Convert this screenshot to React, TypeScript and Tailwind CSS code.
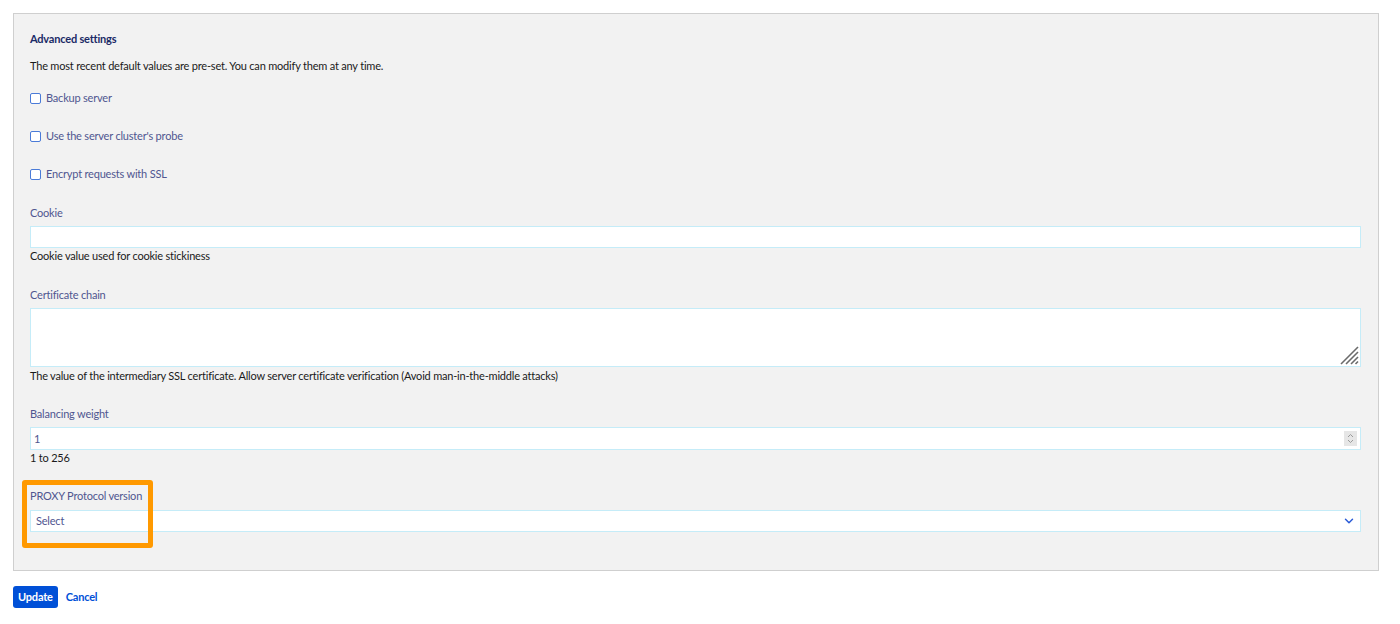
import { ChevronDown } from 'lucide-react'

function Check({ label, className }: { label: string; className: string }) {
  return (
    <label className={`flex items-center gap-[5px] h-[14px] ${className}`}>
      <span className="w-[11px] h-[11px] rounded-[2px] border border-[#4a7bd8] bg-white" />
      <span className="text-[#4f5690]">{label}</span>
    </label>
  )
}

export default function App() {
  return (
    <div className="bg-white min-h-[624px] pt-[13px] px-[13px] text-[11px] leading-[14px] tracking-[-0.2px] font-['Lato',sans-serif] text-[#1a1a1a]">
      {/* Panel */}
      <div className="w-[1366px] bg-[#f2f2f2] border border-[#cfcfcf] pl-[16px] pr-[17px] pt-[18px] pb-[38px]">
        <h2 className="font-bold text-[#1a2a66] h-[14px]">Advanced settings</h2>
        <p className="mt-[13px] h-[14px]">The most recent default values are pre-set. You can modify them at any time.</p>

        <Check label="Backup server" className="mt-[18px]" />
        <Check label="Use the server cluster's probe" className="mt-[24px]" />
        <Check label="Encrypt requests with SSL" className="mt-[24px]" />

        {/* Cookie */}
        <div className="mt-[25px] h-[14px] text-[#4f5690]">Cookie</div>
        <input className="mt-[6px] block w-full h-[22px] bg-white border border-[#c5ecf8] outline-none px-[5px]" />
        <div className="mt-[1px] h-[14px]">Cookie value used for cookie stickiness</div>

        {/* Certificate chain */}
        <div className="mt-[25px] h-[14px] text-[#4f5690]">Certificate chain</div>
        <div className="relative mt-[6px]">
          <textarea className="block w-full h-[59px] bg-white border border-[#c5ecf8] outline-none resize-none" />
          <svg className="absolute right-[2px] bottom-[2px] pointer-events-none" width="19" height="19" viewBox="0 0 19 19">
            <g stroke="#6b6b6b" strokeWidth="1.6">
              <line x1="1" y1="18" x2="18" y2="1" />
              <line x1="6" y1="18" x2="18" y2="6" />
              <line x1="11" y1="18" x2="18" y2="11" />
              <line x1="15.5" y1="18" x2="18" y2="15.5" />
            </g>
          </svg>
        </div>
        <div className="mt-[2px] h-[14px]">The value of the intermediary SSL certificate. Allow server certificate verification (Avoid man-in-the-middle attacks)</div>

        {/* Balancing weight */}
        <div className="mt-[24px] h-[14px] text-[#4f5690]">Balancing weight</div>
        <div className="relative mt-[6px] flex items-center h-[23px] bg-white border border-[#c5ecf8] px-[3px]">
          <span className="text-[#4f5690]">1</span>
          <span className="absolute right-[3px] top-[3px] w-[13px] h-[15px] bg-[#e6e6e6] flex flex-col items-center justify-center">
            <svg width="7" height="11" viewBox="0 0 7 11" fill="none" stroke="#9a9a9a" strokeWidth="1">
              <path d="M1 4 L3.5 1.5 L6 4" />
              <path d="M1 7 L3.5 9.5 L6 7" />
            </svg>
          </span>
        </div>
        <div className="mt-[1px] h-[14px]">1 to 256</div>

        {/* PROXY Protocol version */}
        <div className="relative mt-[24px]">
          <div className="absolute left-[-8px] top-[-9px] w-[131px] h-[68px] border-[5px] border-[#ff9900] rounded-[3px] pointer-events-none" />
          <div className="h-[14px] text-[#4f5690]">PROXY Protocol version</div>
          <div className="mt-[7px] flex items-center justify-between h-[22px] bg-white border border-[#c5ecf8] pl-[5px] pr-[4px]">
            <span className="text-[#4f5690]">Select</span>
            <ChevronDown size={14} strokeWidth={2.5} color="#2a5bd7" />
          </div>
        </div>
      </div>

      {/* Actions */}
      <div className="mt-[15px] flex items-center gap-[8px]">
        <button className="h-[22px] px-[5px] rounded-[3px] bg-[#0050d7] text-white font-bold">Update</button>
        <button className="text-[#0050d7] font-bold">Cancel</button>
      </div>
    </div>
  )
}
